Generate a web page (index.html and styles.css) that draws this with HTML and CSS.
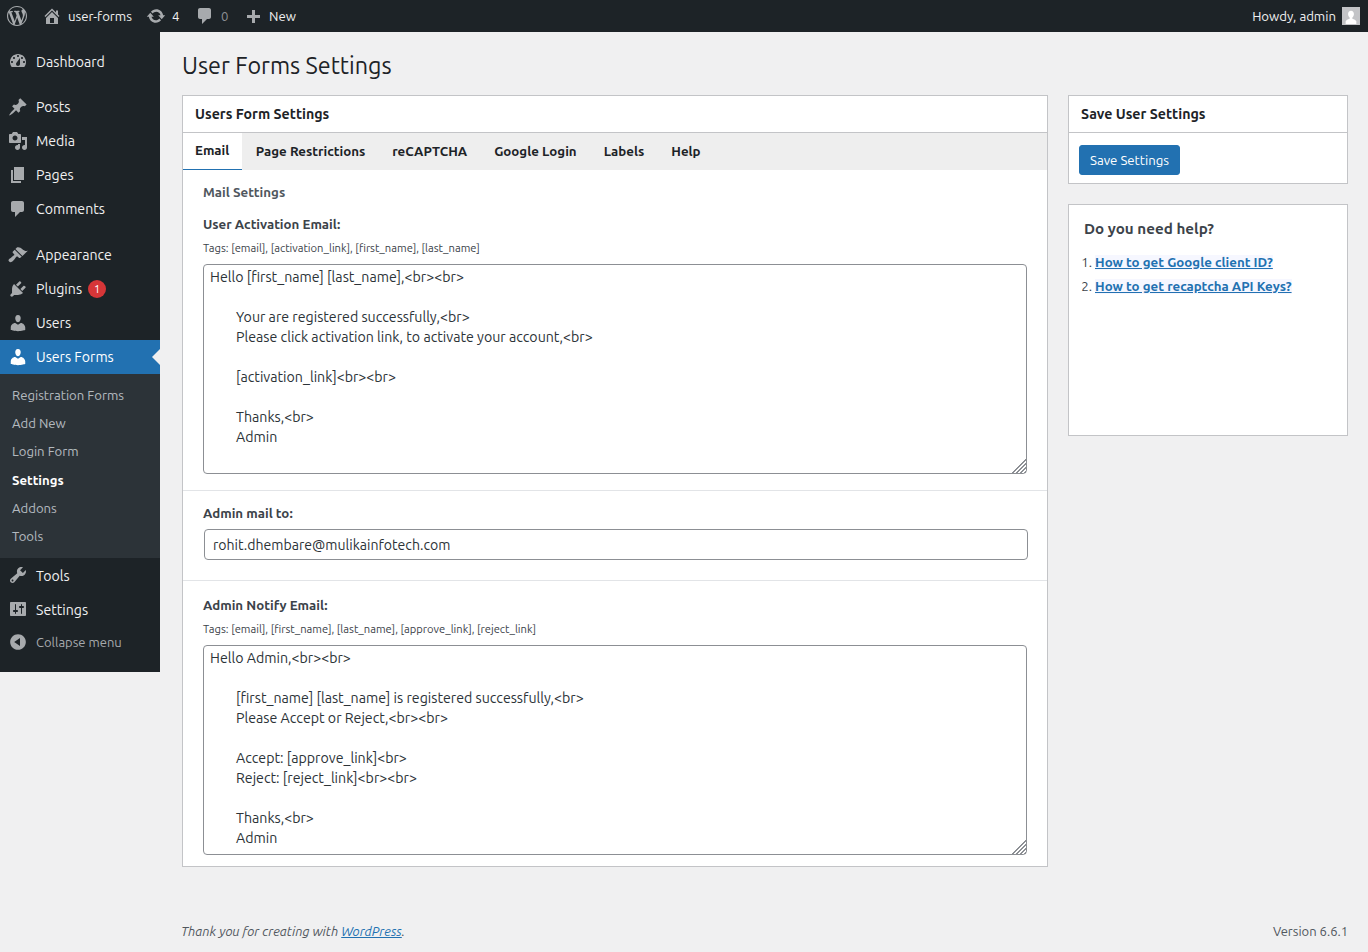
FILE: index.html
```html
<!DOCTYPE html>
<html lang="en">
<head>
<meta charset="utf-8">
<title>User Forms Settings</title>
<link rel="stylesheet" href="styles.css">
</head>
<body>
<header class="adminbar">
  <div class="bar-left">
    <a class="bar-item bar-logo"><svg class="bar-icon" viewBox="0 0 20 20"><path d="M20 10c0-5.51-4.49-10-10-10C4.48 0 0 4.49 0 10c0 5.52 4.48 10 10 10 5.51 0 10-4.48 10-10zM7.78 15.37L4.37 6.22c.55-.02 1.17-.08 1.17-.08.5-.06.44-1.13-.06-1.11 0 0-1.45.11-2.37.11-.18 0-.37 0-.58-.01C4.12 2.69 6.87 1.11 10 1.11c2.33 0 4.45.87 6.05 2.34-.68-.11-1.65.39-1.65 1.58 0 .74.45 1.36.9 2.1.35.61.55 1.36.55 2.46 0 1.49-1.4 5-1.4 5l-3.03-8.37c.54-.02.82-.17.82-.17.5-.05.44-1.25-.06-1.22 0 0-1.44.12-2.38.12-.87 0-2.33-.12-2.33-.12-.5-.03-.56 1.2-.06 1.22l.92.08 1.26 3.41zM17.41 10c.24-.64.74-1.87.43-4.25.7 1.29 1.05 2.71 1.05 4.25 0 3.29-1.73 6.24-4.4 7.78.97-2.59 1.94-5.2 2.92-7.78zM6.1 18.09C3.12 16.65 1.11 13.53 1.11 10c0-1.3.23-2.48.72-3.59C3.25 10.3 4.67 14.2 6.1 18.09zm4.03-6.63l2.58 6.98c-.86.29-1.76.45-2.71.45-.79 0-1.57-.11-2.29-.33.81-2.38 1.62-4.74 2.42-7.1z"/></svg></a>
    <a class="bar-item bar-site"><svg class="bar-icon" viewBox="0 0 20 20"><path d="M16 8.5l1.53 1.53-1.06 1.06L10 4.62l-6.47 6.47-1.06-1.06L10 2.5l4 4v-2h2v4zm-6-2.46l6 5.99V18H4v-5.97zM12 17v-5H8v5h4z"/></svg><span>user-forms</span></a>
    <a class="bar-item bar-updates"><svg class="bar-icon" viewBox="0 0 20 20"><path d="M10.2 3.28c3.53 0 6.43 2.61 6.92 6h2.08l-3.5 4-3.5-4h2.32c-.45-1.97-2.21-3.45-4.32-3.45-1.45 0-2.73.71-3.54 1.78L4.95 5.66C6.23 4.2 8.11 3.28 10.2 3.28zm-.4 13.44c-3.52 0-6.43-2.61-6.92-6H.8l3.5-4c1.17 1.33 2.33 2.67 3.5 4H5.48c.45 1.97 2.21 3.45 4.32 3.45 1.45 0 2.73-.71 3.54-1.78l1.71 1.95c-1.28 1.46-3.15 2.38-5.25 2.38z"/></svg><span>4</span></a>
    <a class="bar-item bar-comments"><svg class="bar-icon" viewBox="0 0 20 20"><path d="M5 2h9c1.1 0 2 .9 2 2v7c0 1.1-.9 2-2 2h-2l-5 5v-5H5c-1.1 0-2-.9-2-2V4c0-1.1.9-2 2-2z"/></svg><span class="muted">0</span></a>
    <a class="bar-item bar-new"><svg class="bar-icon" viewBox="0 0 20 20"><path d="M17 9v3h-5v5H9v-5H4V9h5V4h3v5h5z"/></svg><span>New</span></a>
  </div>
  <a class="bar-account"><span>Howdy, admin</span><span class="avatar"><svg viewBox="0 0 18 18"><path d="M9 3c2 0 3.3 1.6 3.3 3.8 0 1.7-.8 3.3-1.8 4v1.3c2.200.5 3.700 1.400 4.500 2.900v3H3v-3c.8-1.500 2.300-2.400 4.500-2.900v-1.300c-1-.7-1.800-2.300-1.800-4C5.700 4.600 7 3 9 3z"/></svg></span></a>
</header>

<div class="layout">
  <nav class="sidebar">
    <ul class="menu">
      <li class="menu-item"><svg class="menu-icon" viewBox="0 0 20 20"><path fill-rule="evenodd" d="M3.76 16h12.48c1.1-1.37 1.76-3.11 1.76-5 0-4.420-3.580-8-8-8s-8 3.580-8 8c0 1.890.660 3.630 1.760 5zM10 4c.55 0 1 .45 1 1s-.45 1-1 1-1-.45-1-1 .45-1 1-1zM6 6c.55 0 1 .45 1 1s-.45 1-1 1-1-.45-1-1 .45-1 1-1zm8 0c.55 0 1 .45 1 1s-.45 1-1 1-1-.45-1-1 .45-1 1-1zm-5.370 5.550L12 7v6c0 1.100-.9 2-2 2s-2-.9-2-2c0-.57.240-1.080.630-1.450zM4 10c.55 0 1 .45 1 1s-.45 1-1 1-1-.45-1-1 .45-1 1-1zm12 0c.55 0 1 .45 1 1s-.45 1-1 1-1-.45-1-1 .45-1 1-1z"/></svg><span class="label-low">Dashboard</span></li>
      <li class="menu-sep"></li>
      <li class="menu-item"><svg class="menu-icon" viewBox="0 0 20 20"><path d="M10.440 3.020l1.820-1.820 6.360 6.350-1.830 1.820c-1.050-.68-2.480-.57-3.410.360l-.75.750c-.92.930-1.040 2.350-.35 3.410l-1.830 1.820-2.410-2.410-2.800 2.790c-.42.420-3.380 2.710-3.800 2.290s1.860-3.390 2.280-3.810l2.790-2.790L4.100 9.360l1.830-1.820c1.050.690 2.480.570 3.400-.36l.75-.75c.93-.92 1.050-2.350.36-3.410z"/></svg><span>Posts</span></li>
      <li class="menu-item"><svg class="menu-icon" viewBox="0 0 20 20"><path fill-rule="evenodd" d="M13 11V4c0-.55-.45-1-1-1h-1.670L9 1H5L3.670 3H2c-.55 0-1 .45-1 1v7c0 .55.45 1 1 1h10c.55 0 1-.45 1-1zM7 4.500c1.380 0 2.500 1.120 2.500 2.500S8.380 9.500 7 9.500 4.500 8.380 4.500 7 5.620 4.500 7 4.500zM14 6h5v10.500c0 1.380-1.120 2.500-2.500 2.500S14 17.880 14 16.500s1.120-2.500 2.500-2.500c.17 0 .34.020.5.050V9h-3V6zm-4 8.050V13h2v3.500c0 1.380-1.120 2.500-2.500 2.500S7 17.880 7 16.500 8.120 14 9.500 14c.17 0 .34.020.5.050z"/></svg><span>Media</span></li>
      <li class="menu-item"><svg class="menu-icon" viewBox="0 0 20 20"><path d="M6 15V2h10v13H6zm-1 1h8v2H3V5h2v11z"/></svg><span>Pages</span></li>
      <li class="menu-item"><svg class="menu-icon" viewBox="0 0 20 20"><path d="M5 2h9c1.100 0 2 .9 2 2v7c0 1.100-.9 2-2 2h-2l-5 5v-5H5c-1.100 0-2-.9-2-2V4c0-1.100.9-2 2-2z"/></svg><span>Comments</span></li>
      <li class="menu-sep"></li>
      <li class="menu-item"><svg class="menu-icon" viewBox="0 0 20 20"><path d="M14.480 11.060L7.410 3.990l1.500-1.500c.5-.56 2.300-.47 3.510.32 1.210.8 1.430 1.280 2.910 2.100 1.180.64 2.450 1.260 4.450.85zm-.71.71L6.700 4.700 4.930 6.470c-.39.39-.39 1.020 0 1.410l1.060 1.060c.39.39.39 1.030 0 1.420-.6.6-1.430 1.110-2.210 1.690-.35.26-.7.53-1.010.84C1.430 13.230.4 14.450.49 15.590c.03.27.28.55.7.96.4.41.7.66.96.7 1.140.08 2.360-.94 3.700-2.290.31-.31.58-.66.84-1.010.58-.78 1.090-1.610 1.690-2.210.39-.39 1.030-.39 1.420 0l1.060 1.060c.39.39 1.020.39 1.410 0z"/></svg><span>Appearance</span></li>
      <li class="menu-item"><svg class="menu-icon" viewBox="0 0 20 20"><path d="M13.110 4.360L9.870 7.600 8 5.730l3.240-3.240c.35-.34 1.050-.2 1.560.32.52.51.66 1.210.31 1.550zm-8 1.770l.91-1.120 9.010 9.010-1.190.84c-.71.71-2.630 1.160-3.820 1.160H6.140L4.900 17.260c-.59.59-1.540.59-2.120 0-.59-.58-.59-1.530 0-2.120l1.240-1.240v-3.880c0-1.130.4-3.190 1.090-3.890zm7.260 3.970l3.240-3.240c.34-.35 1.040-.21 1.550.31.52.51.66 1.210.31 1.550l-3.240 3.250z"/></svg><span>Plugins</span><span class="badge">1</span></li>
      <li class="menu-item"><svg class="menu-icon" viewBox="0 0 20 20"><path d="M10 9.250c-2.270 0-2.730-3.440-2.730-3.440C7 4.020 7.820 2 9.970 2c2.160 0 2.980 2.020 2.710 3.810 0 0-.41 3.440-2.680 3.440zm0 2.570L12.720 10c2.390 0 4.520 2.330 4.520 4.530v2.490s-3.650 1.130-7.240 1.130c-3.650 0-7.240-1.130-7.240-1.130v-2.490c0-2.250 1.940-4.480 4.470-4.480z"/></svg><span>Users</span></li>
      <li class="menu-item is-current"><svg class="menu-icon" viewBox="0 0 20 20"><path d="M10 9.250c-2.270 0-2.730-3.440-2.730-3.440C7 4.020 7.820 2 9.970 2c2.160 0 2.980 2.020 2.710 3.810 0 0-.41 3.440-2.680 3.440zm0 2.570L12.720 10c2.390 0 4.520 2.330 4.520 4.530v2.490s-3.650 1.130-7.240 1.130c-3.650 0-7.240-1.130-7.240-1.130v-2.490c0-2.250 1.940-4.480 4.470-4.480z"/></svg><span>Users Forms</span></li>
      <li class="submenu">
        <a class="sub-item">Registration Forms</a>
        <a class="sub-item">Add New</a>
        <a class="sub-item">Login Form</a>
        <a class="sub-item is-current">Settings</a>
        <a class="sub-item">Addons</a>
        <a class="sub-item">Tools</a>
      </li>
      <li class="menu-item"><svg class="menu-icon" viewBox="0 0 20 20"><path fill-rule="evenodd" d="M16.680 9.770c-1.340 1.340-3.300 1.670-4.950.99l-5.410 6.520c-.99.99-2.590.99-3.580 0s-.99-2.590 0-3.570l6.520-5.420c-.68-1.650-.35-3.610.99-4.950 1.280-1.280 3.120-1.620 4.720-1.060l-2.890 2.890 2.820 2.820 2.860-2.870c.53 1.580.18 3.390-1.080 4.650zM3.810 16.210c.4.39 1.040.39 1.430 0 .4-.4.4-1.040 0-1.430-.39-.4-1.030-.4-1.430 0-.39.39-.39 1.030 0 1.430z"/></svg><span class="label-low">Tools</span></li>
      <li class="menu-item"><svg class="menu-icon" viewBox="0 0 20 20"><path fill-rule="evenodd" d="M18 16V4c0-.55-.45-1-1-1H3c-.55 0-1 .45-1 1v12c0 .55.45 1 1 1h14c.55 0 1-.45 1-1zM8 11h1c.55 0 1 .45 1 1s-.45 1-1 1H8v1.500c0 .28-.22.5-.5.5s-.5-.22-.5-.5V13H6c-.55 0-1-.45-1-1s.45-1 1-1h1V5.500c0-.28.22-.5.5-.5s.5.22.5.5V11zm5-2h-1c-.55 0-1-.45-1-1s.45-1 1-1h1V5.500c0-.28.22-.5.5-.5s.5.22.5.5V7h1c.55 0 1 .45 1 1s-.45 1-1 1h-1v5.500c0 .28-.22.5-.5.5s-.5-.22-.5-.5V9z"/></svg><span class="label-low">Settings</span></li>
      <li class="menu-collapse"><svg class="menu-icon" viewBox="0 0 20 20"><path fill-rule="evenodd" d="M10 2.160c4.330 0 7.840 3.510 7.840 7.840s-3.510 7.840-7.840 7.840S2.160 14.330 2.160 10 5.710 2.160 10 2.160zm2 11.720V6.120L6.180 9.970z"/></svg><span>Collapse menu</span></li>
    </ul>
  </nav>

  <main class="content">
    <h1 class="page-title">User Forms Settings</h1>
    <div class="columns">
      <section class="panel main-panel">
        <h2 class="panel-head">Users Form Settings</h2>
        <div class="tabs">
          <a class="tab is-active">Email</a>
          <a class="tab">Page Restrictions</a>
          <a class="tab">reCAPTCHA</a>
          <a class="tab">Google Login</a>
          <a class="tab">Labels</a>
          <a class="tab">Help</a>
        </div>
        <div class="group group-first">
          <h3 class="group-title">Mail Settings</h3>
          <label class="field-label">User Activation Email:</label>
          <p class="tags">Tags: [email], [activation_link], [first_name], [last_name]</p>
          <textarea class="mail-text" spellcheck="false">Hello [first_name] [last_name],&lt;br&gt;&lt;br&gt;

        Your are registered successfully,&lt;br&gt;
        Please click activation link, to activate your account,&lt;br&gt;

        [activation_link]&lt;br&gt;&lt;br&gt;

        Thanks,&lt;br&gt;
        Admin</textarea>
        </div>
        <div class="group group-mail">
          <label class="field-label">Admin mail to:</label>
          <input class="mail-input" type="text" value="rohit.dhembare@mulikainfotech.com">
        </div>
        <div class="group group-notify">
          <label class="field-label">Admin Notify Email:</label>
          <p class="tags">Tags: [email], [first_name], [last_name], [approve_link], [reject_link]</p>
          <textarea class="mail-text" spellcheck="false">Hello Admin,&lt;br&gt;&lt;br&gt;

        [first_name] [last_name] is registered successfully,&lt;br&gt;
        Please Accept or Reject,&lt;br&gt;&lt;br&gt;

        Accept: [approve_link]&lt;br&gt;
        Reject: [reject_link]&lt;br&gt;&lt;br&gt;

        Thanks,&lt;br&gt;
        Admin</textarea>
        </div>
      </section>

      <aside class="side">
        <section class="panel save-panel">
          <h2 class="panel-head">Save User Settings</h2>
          <div class="save-body"><button class="save-btn" type="button">Save Settings</button></div>
        </section>
        <section class="panel help-panel">
          <h3 class="help-title">Do you need help?</h3>
          <ol class="help-list">
            <li><a>How to get Google client ID?</a></li>
            <li><a>How to get recaptcha API Keys?</a></li>
          </ol>
        </section>
      </aside>
    </div>
    <footer class="footer">
      <em>Thank you for creating with <a>WordPress</a>.</em>
      <span>Version 6.6.1</span>
    </footer>
  </main>
</div>
</body>
</html>
```
FILE: styles.css
```css
* { box-sizing: border-box; }
html, body { margin: 0; padding: 0; }
body {
  width: 1368px;
  height: 952px;
  overflow: hidden;
  background: #f0f0f1;
  color: #3c434a;
  font-family: Ubuntu, "Noto Sans", sans-serif;
  font-size: 13px;
  line-height: 1.4;
  display: flex;
  flex-direction: column;
}
ul, ol { list-style: none; margin: 0; padding: 0; }
h1, h2, h3, p { margin: 0; }

/* Admin bar */
.adminbar {
  height: 32px;
  flex: none;
  background: #1d2327;
  color: #f0f0f1;
  display: flex;
  justify-content: space-between;
  align-items: center;
  font-size: 13.2px;
}
.bar-left { display: flex; align-items: center; height: 100%; }
.bar-item { display: flex; align-items: center; height: 100%; }
.bar-icon { width: 20px; height: 20px; fill: #a7aaad; flex: none; display: block; }
.bar-logo { padding: 0 7px; width: 35px; }
.bar-site { padding-left: 7px; width: 104px; gap: 6px; }
.bar-updates { padding-left: 7px; gap: 6px; width: 45px; }
.bar-comments { padding-left: 11px; gap: 6px; width: 52px; }
.muted { color: #8c8f94; }
.bar-new { padding-left: 7px; gap: 6px; }
.bar-account { display: flex; align-items: center; gap: 6px; padding-right: 8px; }
.avatar { width: 18px; height: 18px; background: #c3c4c7; display: block; border: 1px solid #c3c4c7; }
.avatar svg { width: 16px; height: 16px; display: block; fill: #fff; }

/* Layout */
.layout { flex: 1; display: flex; min-height: 0; align-items: stretch; }
.sidebar { width: 160px; flex: none; align-self: flex-start; height: 640px; background: #1d2327; padding-top: 12px; }
.menu-item {
  height: 34px;
  display: flex;
  align-items: center;
  color: #f0f0f1;
  font-size: 14.15px;
  line-height: 18px;
  padding-left: 8px;
  position: relative;
}
.label-low { padding-top: 2px; }
.menu-icon { width: 20px; height: 20px; fill: #a7aaad; flex: none; margin-right: 8px; display: block; }
.menu-sep { height: 12px; }
.is-current.menu-item { background: #2271b1; color: #fff; }
.is-current .menu-icon { fill: #fff; }
.is-current.menu-item::after {
  content: "";
  position: absolute;
  right: 0;
  top: 50%;
  margin-top: -8px;
  border: 8px solid transparent;
  border-left-width: 0;
  border-right-color: #f0f0f1;
}
.badge {
  width: 18px; height: 18px; border-radius: 50%;
  background: #d63638; color: #fff;
  font-size: 11px; line-height: 18px; text-align: center;
  margin-left: 6px;
}
.submenu { background: #2c3338; padding: 7px 0 8px; }
.sub-item { display: block; padding: 5px 12px; font-size: 13.15px; line-height: 18.2px; color: rgba(240,246,252,.7); }
.sub-item.is-current { color: #fff; font-weight: 700; }
.menu-collapse {
  display: flex; align-items: center; height: 32px;
  padding-left: 8px; color: #a7aaad; font-size: 13px;
}

/* Content */
.content { flex: 1; min-width: 0; display: flex; flex-direction: column; padding: 0 20px 0 22px; }
.page-title { font-size: 23.35px; font-weight: 400; line-height: 29px; color: #1d2327; padding: 19px 0 15px; }
.columns { display: flex; gap: 20px; align-items: flex-start; }
.panel { background: #fff; border: 1px solid #c3c4c7; }
.main-panel { width: 866px; flex: none; height: 772px; }
.side { flex: 1; display: flex; flex-direction: column; gap: 20px; }
.panel-head {
  font-size: 14.2px; font-weight: 700; line-height: 19px; color: #1d2327;
  padding: 9px 12px 8px; height: 37px; border-bottom: 1px solid #c3c4c7;
}
.tabs { display: flex; background: #eee; height: 37px; }
.tab { font-size: 13.3px; font-weight: 700; color: #1d2327; padding: 0 13.5px; line-height: 37px; }
.tab.is-active { background: #fff; padding: 0 13px 0 12px; border-bottom: 1px solid #2271b1; line-height: 36px; }
.group { padding: 0 20px; border-bottom: 1px solid #e2e4e7; }
.group:last-child { border-bottom: 0; }
.group-first { height: 321px; padding-top: 14px; }
.group-title { font-size: 13.3px; font-weight: 700; line-height: 18px; color: #50575e; margin-bottom: 14px; }
.field-label { display: block; font-size: 13.3px; font-weight: 700; line-height: 18px; color: #3c434a; }
.tags { font-size: 11.2px; line-height: 14px; color: #3c434a; margin-top: 7px; margin-bottom: 9px; }
.mail-text {
  display: block;
  width: 824px; height: 210px;
  border: 1px solid #8c8f94; border-radius: 4px;
  padding: 2px 6px; margin: 0;
  background: #fff; color: #2c3338;
  font-family: Ubuntu, "Noto Sans", sans-serif; font-size: 14.2px; line-height: 20px;
  outline: 0;
}
.mail-text::-webkit-resizer {
  background:
    linear-gradient(135deg, #fff 50%, transparent 50%),
    repeating-linear-gradient(135deg, #8c8f94 0 1px, #fff 1px 2.8px);
}
.group-mail { height: 90px; padding-top: 14px; }
.group-mail .field-label { margin-bottom: 6px; }
.mail-input {
  display: block; width: 824px; height: 31px; margin-left: 1px;
  border: 1px solid #8c8f94; border-radius: 4px;
  padding: 0 8px; background: #fff; color: #2c3338;
  font-family: Ubuntu, "Noto Sans", sans-serif; font-size: 14.1px; outline: 0;
}
.group-notify { padding-top: 16px; }

.save-panel { height: 89px; }
.save-body { padding: 12px 10px; }
.save-btn {
  display: block; height: 30px; width: 101px; padding: 0;
  background: #2271b1; color: #fff; border: 1px solid #2271b1; border-radius: 3px;
  font-family: Ubuntu, "Noto Sans", sans-serif; font-size: 13.2px; line-height: 28px;
}
.help-panel { height: 232px; padding: 13px 15px; }
.help-title { font-size: 15.2px; font-weight: 700; line-height: 22px; color: #3c434a; margin-bottom: 14px; }
.help-list { list-style: decimal; padding-left: 11px; }
.help-list li { font-size: 13.3px; line-height: 18px; margin-bottom: 6px; }
.help-list a { color: #2271b1; font-weight: 700; text-decoration: underline; background: #f6f7ff; }

.footer {
  margin-top: auto;
  display: flex; justify-content: space-between;
  font-size: 13px; line-height: 18px; color: #50575e;
  padding-bottom: 12px;
  margin-left: -1px;
}
.footer a { color: #2271b1; text-decoration: underline; }
```
